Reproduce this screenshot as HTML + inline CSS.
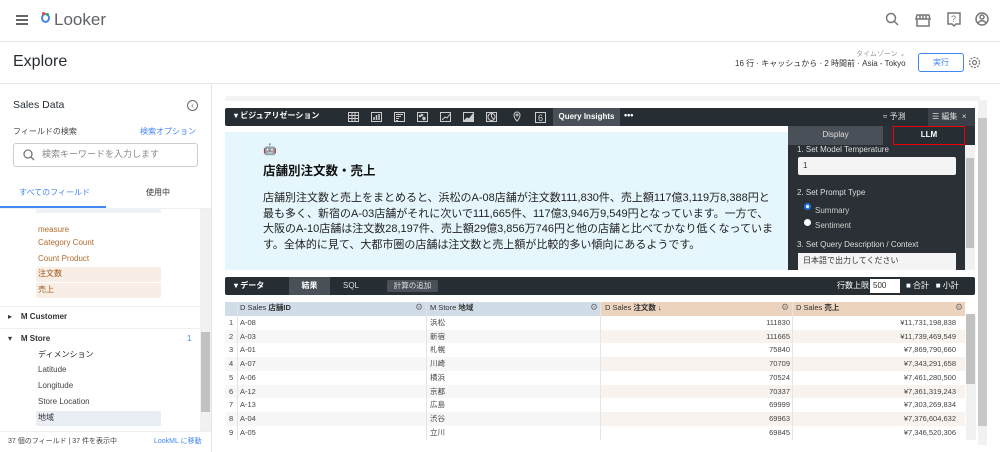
<!DOCTYPE html>
<html><head><meta charset="utf-8"><style>
*{box-sizing:border-box;margin:0;padding:0}
body{width:1000px;height:452px;overflow:hidden;background:#fff;font-family:"Liberation Sans","Noto Sans CJK JP",sans-serif;color:#333;position:relative}
.a{position:absolute}
.t{white-space:nowrap;line-height:1.15}
</style></head><body>
<!-- top bar -->
<div class="a" style="left:16px;top:15px;width:12px;height:2px;background:#666;box-shadow:0 4px 0 #666,0 8px 0 #666"></div>
<div class="a" style="left:41px;top:13px;width:9px;height:10px;border:2px solid #4285f4;border-radius:50%"></div>
<div class="a" style="left:42px;top:12px;width:3px;height:3px;border-radius:50%;background:#ea4335"></div>
<div class="a" style="left:46px;top:13px;width:3px;height:3px;border-radius:50%;background:#34a853"></div>
<div class="a t" style="left:54px;top:10px;font-size:17px;color:#5f6368">Looker</div>
<svg class="a" style="left:884px;top:12px" width="120" height="16" fill="none" stroke="#777" stroke-width="1.5">
<circle cx="7" cy="6" r="4.5"/><path d="M10 9l4 4"/>
<path d="M33 3h12l1 4H32zM33 7v7h12V7M36 3v4M39 3v4M42 3v4"/>
<path d="M64 1h12v11h-4l-2 2-2-2h-4z"/><text x="67" y="10" font-size="9" fill="#777" stroke="none">?</text>
<circle cx="98" cy="7" r="6"/><circle cx="98" cy="5" r="2"/><path d="M94 11c2-3 6-3 8 0"/>
</svg>
<div class="a" style="left:0;top:41px;width:1000px;height:1px;background:#e5e5e5"></div>
<div class="a t" style="left:13px;top:53px;font-size:16px;color:#262d33">Explore</div>
<div class="a t" style="left:856px;top:51px;font-size:7px;color:#999">タイムゾーン ⌄</div>
<div class="a t" style="left:735px;top:59px;font-size:8px;color:#333">16 行 · キャッシュから · 2 時間前 · Asia - Tokyo</div>
<div class="a t" style="left:918px;top:53px;width:46px;height:19px;border:1px solid #4285f4;border-radius:3px;font-size:8px;color:#4285f4;text-align:center;line-height:17px">実行</div>
<svg class="a" style="left:968px;top:56px" width="13" height="13" fill="none" stroke="#777" stroke-width="1.2"><circle cx="6.5" cy="6.5" r="2"/><circle cx="6.5" cy="6.5" r="5" stroke-dasharray="2 1.2"/></svg>
<div class="a" style="left:0;top:83px;width:1000px;height:1px;background:#e8e8e8"></div>
<!-- left panel -->
<div class="a" style="left:211px;top:84px;width:1px;height:368px;background:#e5e5e5"></div>
<div class="a t" style="left:13px;top:99px;font-size:10.5px;color:#262d33">Sales Data</div>
<div class="a" style="left:187px;top:100px;width:11px;height:11px;border:1px solid #666;border-radius:50%;font-size:8px;line-height:9px;text-align:center;color:#666">‹</div>
<div class="a t" style="left:13px;top:127px;font-size:8px;color:#444">フィールドの検索</div>
<div class="a t" style="left:140px;top:127px;font-size:8px;color:#4285f4">検索オプション</div>
<div class="a" style="left:13px;top:143px;width:185px;height:24px;border:1px solid #ccc;border-radius:3px"></div>
<svg class="a" style="left:23px;top:149px" width="12" height="12" fill="none" stroke="#777" stroke-width="1.3"><circle cx="5" cy="5" r="4"/><path d="M8 8l3 3"/></svg>
<div class="a t" style="left:42px;top:149px;font-size:9px;color:#888">検索キーワードを入力します</div>
<div class="a t" style="left:19px;top:188px;font-size:8px;color:#4285f4">すべてのフィールド</div>
<div class="a t" style="left:146px;top:188px;font-size:8px;color:#333">使用中</div>
<div class="a" style="left:0;top:206px;width:106px;height:2px;background:#4285f4"></div>
<div class="a" style="left:0;top:208px;width:211px;height:1px;background:#eee"></div>
<div class="a" style="left:36px;top:208px;width:125px;height:5px;background:#eef1f5"></div>
<div class="a t" style="left:38px;top:225px;font-size:8px;color:#b26a2e">measure</div>
<div class="a t" style="left:38px;top:238px;font-size:8px;color:#b26a2e">Category Count</div>
<div class="a t" style="left:38px;top:254px;font-size:8px;color:#b26a2e">Count Product</div>
<div class="a" style="left:36px;top:267px;width:125px;height:15px;background:#f8eee6;border-radius:2px"></div>
<div class="a t" style="left:38px;top:269px;font-size:8px;color:#a05a20">注文数</div>
<div class="a" style="left:36px;top:283px;width:125px;height:15px;background:#f8eee6;border-radius:2px"></div>
<div class="a t" style="left:38px;top:285px;font-size:8px;color:#a05a20">売上</div>
<div class="a" style="left:0;top:306px;width:200px;height:1px;background:#eee"></div>
<div class="a t" style="left:8px;top:312px;font-size:8px;color:#333">▸&nbsp;&nbsp;&nbsp;&nbsp;<b>M Customer</b></div>
<div class="a" style="left:0;top:328px;width:200px;height:1px;background:#eee"></div>
<div class="a t" style="left:8px;top:334px;font-size:8px;color:#333">▾&nbsp;&nbsp;&nbsp;&nbsp;<b>M Store</b></div>
<div class="a t" style="left:187px;top:334px;font-size:8px;color:#4285f4">1</div>
<div class="a t" style="left:38px;top:350px;font-size:8px;color:#222">ディメンション</div>
<div class="a t" style="left:38px;top:365px;font-size:8px;color:#444">Latitude</div>
<div class="a t" style="left:38px;top:381px;font-size:8px;color:#444">Longitude</div>
<div class="a t" style="left:38px;top:397px;font-size:8px;color:#444">Store Location</div>
<div class="a" style="left:36px;top:411px;width:125px;height:15px;background:#e9eef5;border-radius:2px"></div>
<div class="a t" style="left:38px;top:413px;font-size:8px;color:#333">地域</div>
<div class="a" style="left:200px;top:209px;width:11px;height:222px;background:#f1f1f1"></div>
<div class="a" style="left:201px;top:332px;width:9px;height:80px;background:#c1c1c1"></div>
<div class="a" style="left:0;top:431px;width:211px;height:1px;background:#eee"></div>
<div class="a t" style="left:8px;top:438px;font-size:7px;color:#444">37 個のフィールド | 37 件を表示中</div>
<div class="a t" style="left:154px;top:438px;font-size:7px;color:#4285f4">LookML に移動</div>
<!-- right area -->
<div class="a" style="left:225px;top:96px;width:755px;height:5px;background:#f2f3f5"></div>
<div class="a" style="left:225px;top:108px;width:750px;height:18px;background:#262d33;border-radius:2px"></div>
<div class="a t" style="left:234px;top:111px;font-size:8px;color:#fff;font-weight:bold">▾ ビジュアリゼーション</div>
<svg class="a" style="left:347px;top:110px" width="200" height="14" fill="none" stroke="#ccc" stroke-width="1">
<rect x="1.5" y="2.5" width="10" height="9"/><path d="M1.5 5.5h10M1.5 8.5h10M5 2.5v9M8 2.5v9"/>
<rect x="24.5" y="2.5" width="10" height="9"/><path d="M27 10V7M29.5 10V5M32 10V4" stroke-width="1.5"/>
<rect x="47.5" y="2.5" width="10" height="9"/><path d="M49 4.5h7M49 6.5h5M49 8.5h3M49 10.5h2"/>
<rect x="70.5" y="2.5" width="10" height="9"/><circle cx="73" cy="6" r=".8" fill="#ccc"/><circle cx="77" cy="8.5" r="1.2" fill="#ccc"/><circle cx="75" cy="5" r=".8" fill="#ccc"/>
<rect x="93.5" y="2.5" width="10" height="9"/><path d="M95 10l3-3 2 1 3-4"/>
<rect x="116.5" y="2.5" width="10" height="9"/><path d="M117 11l3-3 2 1 4-5v7z" fill="#ccc"/>
<rect x="139.5" y="2.5" width="10" height="9"/><circle cx="144.5" cy="7" r="3.5"/><path d="M144.5 7V3.5M144.5 7l2.5 2.5"/>
<path d="M170 11c-3-3-3-5-3-6a3 3 0 016 0c0 1 0 3-3 6z"/><circle cx="170" cy="5" r="1"/>
<rect x="188.5" y="2.5" width="10" height="10"/><text x="191" y="11" font-size="9" fill="#ccc" stroke="none">6</text>
</svg>
<div class="a t" style="left:553px;top:108px;width:67px;height:18px;background:#4a5058;color:#fff;font-size:8px;font-weight:bold;text-align:center;line-height:18px">Query Insights</div>
<div class="a t" style="left:624px;top:110px;font-size:9px;color:#fff;font-weight:bold">•••</div>
<div class="a t" style="left:883px;top:112px;font-size:8px;color:#ddd">≈ 予測</div>
<div class="a" style="left:928px;top:108px;width:47px;height:18px;background:#3a4048"></div>
<div class="a t" style="left:932px;top:112px;font-size:8px;color:#ddd">☰ 編集&nbsp; ×</div>
<!-- insight -->
<div class="a" style="left:225px;top:132px;width:563px;height:138px;background:#e5f7fd"></div>
<div class="a t" style="left:263px;top:144px;font-size:11px">🤖</div>
<div class="a t" style="left:263px;top:164px;font-size:12.5px;font-weight:bold;color:#111">店舗別注文数・売上</div>
<div class="a" style="left:263px;top:191px;width:512px;font-size:11px;line-height:15.7px;color:#222">店舗別注文数と売上をまとめると、浜松のA-08店舗が注文数111,830件、売上額117億3,119万8,388円と最も多く、新宿のA-03店舗がそれに次いで111,665件、117億3,946万9,549円となっています。一方で、大阪のA-10店舗は注文数28,197件、売上額29億3,856万746円と他の店舗と比べてかなり低くなっています。全体的に見て、大都市圏の店舗は注文数と売上額が比較的多い傾向にあるようです。</div>
<!-- side panel -->
<div class="a" style="left:788px;top:126px;width:187px;height:144px;background:#2b3036"></div>
<div class="a" style="left:788px;top:126px;width:95px;height:19px;background:#4a5058"></div>
<div class="a t" style="left:788px;top:130px;width:95px;text-align:center;font-size:8px;color:#ddd">Display</div>
<div class="a" style="left:893px;top:126px;width:72px;height:19px;border:1.5px solid #e00;background:#262d33"></div>
<div class="a t" style="left:893px;top:130px;width:72px;text-align:center;font-size:8px;color:#fff;font-weight:bold">LLM</div>
<div class="a t" style="left:797px;top:145px;font-size:8px;color:#ddd">1. Set Model Temperature</div>
<div class="a" style="left:798px;top:157px;width:158px;height:18px;background:#f4f4f4;border-radius:2px;font-size:8px;padding:4px 5px">1</div>
<div class="a t" style="left:797px;top:188px;font-size:8px;color:#ddd">2. Set Prompt Type</div>
<div class="a" style="left:804px;top:203px;width:7px;height:7px;border-radius:50%;background:#fff;border:2px solid #1a73e8"></div>
<div class="a t" style="left:815px;top:206px;font-size:8px;color:#ccc">Summary</div>
<div class="a" style="left:804px;top:219px;width:7px;height:7px;border-radius:50%;background:#fff"></div>
<div class="a t" style="left:815px;top:221px;font-size:8px;color:#ccc">Sentiment</div>
<div class="a t" style="left:797px;top:240px;font-size:8px;color:#ddd">3. Set Query Description / Context</div>
<div class="a" style="left:798px;top:253px;width:158px;height:17px;background:#f4f4f4;font-size:8px;padding:3px 5px;white-space:nowrap;line-height:1.2">日本語で出力してください</div>
<div class="a" style="left:965px;top:145px;width:10px;height:125px;background:#f1f1f1"></div>
<div class="a" style="left:966px;top:158px;width:8px;height:90px;background:#c1c1c1"></div>
<div class="a" style="left:978px;top:100px;width:9px;height:345px;background:#f1f1f1"></div>
<div class="a" style="left:978px;top:118px;width:9px;height:308px;background:#c8c8c8"></div>
<!-- data bar -->
<div class="a" style="left:225px;top:277px;width:750px;height:18px;background:#262d33;border-radius:2px"></div>
<div class="a t" style="left:234px;top:281px;font-size:8px;color:#fff;font-weight:bold">▾ データ</div>
<div class="a t" style="left:289px;top:277px;width:41px;height:18px;background:#4a5058;color:#fff;font-size:8px;font-weight:bold;text-align:center;line-height:18px">結果</div>
<div class="a t" style="left:343px;top:281px;font-size:8px;color:#ddd">SQL</div>
<div class="a t" style="left:387px;top:280px;width:51px;height:12px;background:#4a5058;color:#ddd;font-size:7.5px;text-align:center;line-height:12px;border-radius:2px">計算の追加</div>
<div class="a t" style="left:837px;top:281px;font-size:8px;color:#fff">行数上限</div>
<div class="a" style="left:870px;top:279px;width:30px;height:14px;background:#fff;font-size:8px;padding:2px 3px;line-height:1.2">500</div>
<div class="a t" style="left:906px;top:281px;font-size:8px;color:#fff">■ 合計 &nbsp; ■ 小計</div>
<!-- table -->
<div class="a" style="left:225px;top:302px;width:375px;height:14px;background:#d0dce8"></div>
<div class="a" style="left:600px;top:302px;width:365px;height:14px;background:#ecd3bd"></div>
<div class="a t" style="left:240px;top:304px;font-size:7.5px">D Sales <b>店舗ID</b></div>
<div class="a t" style="left:430px;top:304px;font-size:7.5px">M Store <b>地域</b></div>
<div class="a t" style="left:605px;top:304px;font-size:7.5px">D Sales <b>注文数 ↓</b></div>
<div class="a t" style="left:796px;top:304px;font-size:7.5px">D Sales <b>売上</b></div>
<div class="a t" style="left:415px;top:302px;font-size:9px;color:#777">⚙</div>
<div class="a t" style="left:590px;top:302px;font-size:9px;color:#777">⚙</div>
<div class="a t" style="left:781px;top:302px;font-size:9px;color:#777">⚙</div>
<div class="a t" style="left:955px;top:302px;font-size:9px;color:#777">⚙</div>
<div class="a" style="left:966px;top:316px;width:10px;height:124px;background:#f1f1f1"></div>
<div class="a" style="left:966px;top:314px;width:9px;height:70px;background:#c1c1c1"></div>
<div id="rows"></div>
<script>
var d=[["A-08","浜松","111830","¥11,731,198,838"],["A-03","新宿","111665","¥11,739,469,549"],["A-01","札幌","75840","¥7,869,790,660"],["A-07","川崎","70709","¥7,343,291,658"],["A-06","横浜","70524","¥7,461,280,500"],["A-12","京都","70337","¥7,361,319,243"],["A-13","広島","69999","¥7,303,269,834"],["A-04","渋谷","69963","¥7,376,604,632"],["A-05","立川","69845","¥7,346,520,306"]];
var h="";d.forEach(function(r,i){var y=316+i*13.7,bg=i%2?"#f7f7f7":"#fff",bg2=i%2?"#f8f3ef":"#fff";
h+='<div class="a" style="left:225px;top:'+y+'px;width:375px;height:14px;background:'+bg+'"></div><div class="a" style="left:600px;top:'+y+'px;width:365px;height:14px;background:'+bg2+'"></div>';
var s='top:'+(y+1)+'px;height:12px;line-height:12px;font-size:7.5px;color:#444;';
h+='<div class="a t" style="left:229px;'+s+'">'+(i+1)+'</div><div class="a t" style="left:240px;'+s+'">'+r[0]+'</div><div class="a t" style="left:430px;'+s+'">'+r[1]+'</div><div class="a t" style="left:600px;width:190px;text-align:right;'+s+'">'+r[2]+'</div><div class="a t" style="left:792px;width:164px;text-align:right;'+s+'">'+r[3]+'</div>';});
h+='<div class="a" style="left:237px;top:302px;width:1px;height:138px;background:#e5e5e5"></div><div class="a" style="left:426px;top:302px;width:1px;height:138px;background:#e5e5e5"></div><div class="a" style="left:600px;top:302px;width:1px;height:138px;background:#e5e5e5"></div><div class="a" style="left:792px;top:302px;width:1px;height:138px;background:#e5e5e5"></div>';
document.getElementById("rows").innerHTML=h;
</script>
</body></html>
